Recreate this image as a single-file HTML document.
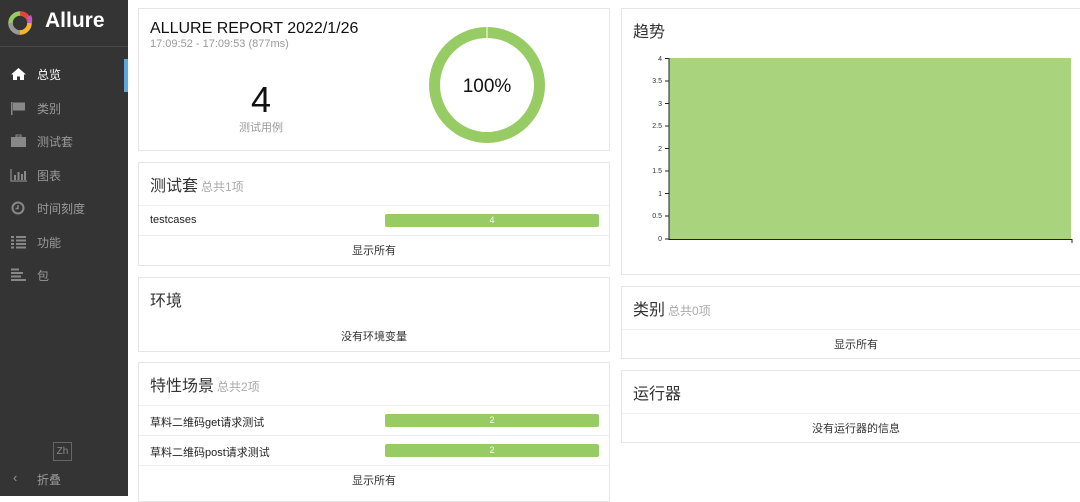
<!DOCTYPE html>
<html><head><meta charset="utf-8"><style>
*{box-sizing:border-box;margin:0;padding:0}
body{width:1080px;height:496px;overflow:hidden;background:#fff;font-family:"Liberation Sans","Noto Sans CJK SC",sans-serif;position:relative;color:#333}
.side{position:absolute;left:0;top:0;width:128px;height:496px;background:#343434}
.logo{height:47px;border-bottom:1px solid #4a4a4a;position:relative}
.logo span{position:absolute;left:45px;top:9px;color:#fff;font-size:21px;font-weight:bold}
.item{position:absolute;left:0;width:128px;height:33px;color:#999;font-size:12px}
.item .t{position:absolute;left:37px;top:8px}
.item.act .t{color:#fff}
.ic{position:absolute;left:10px;top:9px;width:17px;height:14px}
.card{position:absolute;border:1px solid #e6e6e6;background:#fff}
.hd{height:43px;border-bottom:1px solid #eee;padding:9px 11px;font-size:16px;color:#333}
.hd small{font-size:12px;color:#aaa;margin-left:3px}
.row{height:30px;border-bottom:1px solid #eee;position:relative;font-size:11px;color:#222}
.row .n{position:absolute;left:11px;top:8px}
.bar{position:absolute;left:246px;top:8px;width:214px;height:13px;background:#97cc64;border-radius:2px;color:#fff;font-size:9px;text-align:center;line-height:13px}
.ft{height:30px;text-align:center;font-size:11px;line-height:30px;color:#333}
</style></head><body>
<div class="side">
 <div class="logo">
  <svg style="position:absolute;left:7px;top:10px" width="26" height="26" viewBox="0 0 26 26">
   <circle cx="13" cy="13" r="9.5" fill="none" stroke="#97cc64" stroke-width="4.5"/>
   <path d="M13 3.5A9.5 9.5 0 0 1 22.5 13" fill="none" stroke="#e8433b" stroke-width="4.5"/>
   <path d="M22.5 13A9.5 9.5 0 0 1 13 22.5" fill="none" stroke="#f9b42d" stroke-width="4.5"/>
   <path d="M13 22.5A9.5 9.5 0 0 1 3.5 13" fill="none" stroke="#999" stroke-width="4.5"/>
   <path d="M22 6A9.5 9.5 0 0 1 22.5 13" fill="none" stroke="#c559c4" stroke-width="4.5"/>
  </svg>
  <span>Allure</span>
 </div>
 <div style="position:absolute;left:124px;top:59px;width:4px;height:33px;background:#5ea7d8"></div>
 <div class="item act" style="top:58px"><svg class="ic" viewBox="0 0 17 14"><path d="M8.5 1L1 7.5h2V13h4V9.5h3V13h4V7.5h2z" fill="#fff"/></svg><span class="t">总览</span></div>
 <div class="item" style="top:92px"><svg class="ic" viewBox="0 0 17 14"><rect x="1" y="1" width="1.5" height="13" fill="#888"/><path d="M3 1.5h12v8H3z" fill="#888"/></svg><span class="t">类别</span></div>
 <div class="item" style="top:125px"><svg class="ic" viewBox="0 0 17 14"><rect x="1" y="3" width="15" height="10" fill="#888"/><rect x="6" y="1" width="5" height="2" fill="none" stroke="#888"/></svg><span class="t">测试套</span></div>
 <div class="item" style="top:159px"><svg class="ic" viewBox="0 0 17 14"><path d="M1 1v12h16" fill="none" stroke="#888" stroke-width="1.3"/><rect x="4" y="7" width="2" height="5" fill="#888"/><rect x="7.5" y="4" width="2" height="8" fill="#888"/><rect x="11" y="6" width="2" height="6" fill="#888"/><rect x="14" y="3" width="2" height="9" fill="#888"/></svg><span class="t">图表</span></div>
 <div class="item" style="top:192px"><svg class="ic" viewBox="0 0 17 14"><circle cx="8" cy="7" r="5.5" fill="none" stroke="#888" stroke-width="2"/><path d="M8 4v3.5H5.5" fill="none" stroke="#888" stroke-width="1.5"/></svg><span class="t">时间刻度</span></div>
 <div class="item" style="top:226px"><svg class="ic" viewBox="0 0 17 14"><path d="M1 2h3M6 2h10M1 5.5h3M6 5.5h10M1 9h3M6 9h10M1 12.5h3M6 12.5h10" stroke="#888" stroke-width="2"/></svg><span class="t">功能</span></div>
 <div class="item" style="top:259px"><svg class="ic" viewBox="0 0 17 14"><path d="M1 1.5h8M1 5h12M1 8.5h10M1 12h15" stroke="#888" stroke-width="2"/></svg><span class="t">包</span></div>
 <div style="position:absolute;left:53px;top:442px;width:19px;height:19px;border:1px solid #666;color:#888;font-size:10px;text-align:center;line-height:17px">Zh</div>
 <div style="position:absolute;left:13px;top:470px;color:#999;font-size:13px">‹</div>
 <div style="position:absolute;left:37px;top:471px;color:#999;font-size:12px">折叠</div>
</div>

<div class="card" style="left:138px;top:8px;width:472px;height:143px">
 <div style="position:absolute;left:11px;top:11px;font-size:16px;color:#111">ALLURE REPORT 2022/1/26</div>
 <div style="position:absolute;left:11px;top:29px;font-size:11px;color:#999">17:09:52 - 17:09:53 (877ms)</div>
 <div style="position:absolute;left:72px;top:70px;width:100px;text-align:center;font-size:36px;color:#111">4</div>
 <div style="position:absolute;left:72px;top:110px;width:100px;text-align:center;font-size:11px;color:#999">测试用例</div>
 <svg style="position:absolute;left:289px;top:17px" width="118" height="118" viewBox="0 0 118 118"><circle cx="59" cy="59" r="52.5" fill="none" stroke="#97cc64" stroke-width="11"/><line x1="59" y1="1" x2="59" y2="13" stroke="#fff" stroke-width="1"/></svg>
 <div style="position:absolute;left:298px;top:67px;width:100px;text-align:center;font-size:19px;color:#111">100%</div>
</div>

<div class="card" style="left:138px;top:162px;width:472px;height:104px">
 <div class="hd">测试套<small>总共1项</small></div>
 <div class="row"><span class="n">testcases</span><div class="bar">4</div></div>
 <div class="ft">显示所有</div>
</div>

<div class="card" style="left:138px;top:277px;width:472px;height:75px">
 <div class="hd" style="border:0">环境</div>
 <div style="text-align:center;font-size:11px;margin-top:7px">没有环境变量</div>
</div>

<div class="card" style="left:138px;top:362px;width:472px;height:140px">
 <div class="hd">特性场景<small>总共2项</small></div>
 <div class="row"><span class="n">草料二维码get请求测试</span><div class="bar">2</div></div>
 <div class="row"><span class="n">草料二维码post请求测试</span><div class="bar">2</div></div>
 <div class="ft">显示所有</div>
</div>

<div class="card" style="left:621px;top:8px;width:470px;height:267px">
 <div class="hd" style="border:0">趋势</div>
 <svg style="position:absolute;left:0;top:0" width="470" height="267">
  <rect x="47" y="49" width="402" height="181" fill="#a9d47d"/>
  <line x1="47" y1="49" x2="47" y2="231" stroke="#222"/>
  <line x1="47" y1="230.5" x2="450" y2="230.5" stroke="#222"/>
  <line x1="450" y1="230" x2="450" y2="234" stroke="#222"/>
  <g font-size="7" fill="#333" text-anchor="end" font-family="Liberation Sans">
   <text x="40" y="52">4</text><text x="40" y="74">3.5</text><text x="40" y="97">3</text><text x="40" y="119">2.5</text><text x="40" y="142">2</text><text x="40" y="164">1.5</text><text x="40" y="187">1</text><text x="40" y="209">0.5</text><text x="40" y="232">0</text>
  </g>
  <g stroke="#222"><line x1="43" y1="49.5" x2="47" y2="49.5"/><line x1="43" y1="72" x2="47" y2="72"/><line x1="43" y1="94.5" x2="47" y2="94.5"/><line x1="43" y1="117" x2="47" y2="117"/><line x1="43" y1="139.5" x2="47" y2="139.5"/><line x1="43" y1="162" x2="47" y2="162"/><line x1="43" y1="184.5" x2="47" y2="184.5"/><line x1="43" y1="207" x2="47" y2="207"/><line x1="43" y1="230" x2="47" y2="230"/></g>
 </svg>
</div>

<div class="card" style="left:621px;top:286px;width:470px;height:73px">
 <div class="hd">类别<small>总共0项</small></div>
 <div class="ft">显示所有</div>
</div>

<div class="card" style="left:621px;top:370px;width:470px;height:73px">
 <div class="hd">运行器</div>
 <div class="ft">没有运行器的信息</div>
</div>
</body></html>
